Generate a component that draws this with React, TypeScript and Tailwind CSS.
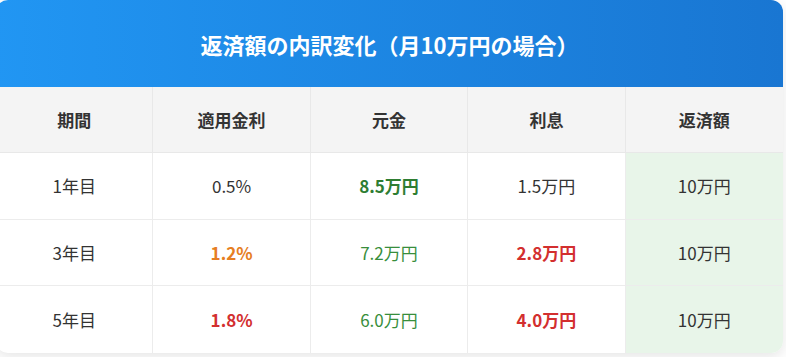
import React from "react";

type Cell = { text: string; cls?: string };

const rows: Cell[][] = [
  [
    { text: "1年目" },
    { text: "0.5%" },
    { text: "8.5万円", cls: "font-bold text-[#2e7d32]" },
    { text: "1.5万円" },
    { text: "10万円" },
  ],
  [
    { text: "3年目" },
    { text: "1.2%", cls: "font-bold text-[#e67e22]" },
    { text: "7.2万円", cls: "text-[#388e3c]" },
    { text: "2.8万円", cls: "font-bold text-[#d32f2f]" },
    { text: "10万円" },
  ],
  [
    { text: "5年目" },
    { text: "1.8%", cls: "font-bold text-[#d32f2f]" },
    { text: "6.0万円", cls: "text-[#388e3c]" },
    { text: "4.0万円", cls: "font-bold text-[#d32f2f]" },
    { text: "10万円" },
  ],
];

const headers = ["期間", "適用金利", "元金", "利息", "返済額"];

export default function App() {
  return (
    <div
      className="min-h-[357px] w-[786px] overflow-hidden bg-white"
      style={{ fontFamily: '"Noto Sans CJK JP", "Noto Sans", sans-serif' }}
    >
      <div className="ml-[-4px] w-[787px] overflow-hidden rounded-xl bg-white shadow-[0_4px_14px_rgba(0,0,0,0.1)]">
        <div className="flex h-[87px] items-center justify-center bg-gradient-to-r from-[#2196f3] to-[#1976d2]">
          <h2 className="text-[22px] font-bold text-white leading-none">
            返済額の内訳変化（月10万円の場合）
          </h2>
        </div>
        <div className="grid grid-cols-5">
          {headers.map((h, i) => (
            <div
              key={h}
              className={`flex h-[66px] items-center justify-center border-b border-[#e8e8e8] bg-[#f4f4f4] text-[17px] font-bold text-[#333] ${
                i < 4 ? "border-r" : ""
              }`}
            >
              {h}
            </div>
          ))}
          {rows.map((row, r) =>
            row.map((c, i) => (
              <div
                key={`${r}-${i}`}
                className={`flex h-[66.5px] items-center justify-center text-[17px] ${
                  r < 2 ? "border-b border-[#ececec]" : ""
                } ${i < 4 ? "border-r border-[#ececec]" : "bg-[#e8f5e9]"} ${
                  c.cls ?? "text-[#333]"
                }`}
              >
                {c.text}
              </div>
            ))
          )}
        </div>
      </div>
    </div>
  );
}
